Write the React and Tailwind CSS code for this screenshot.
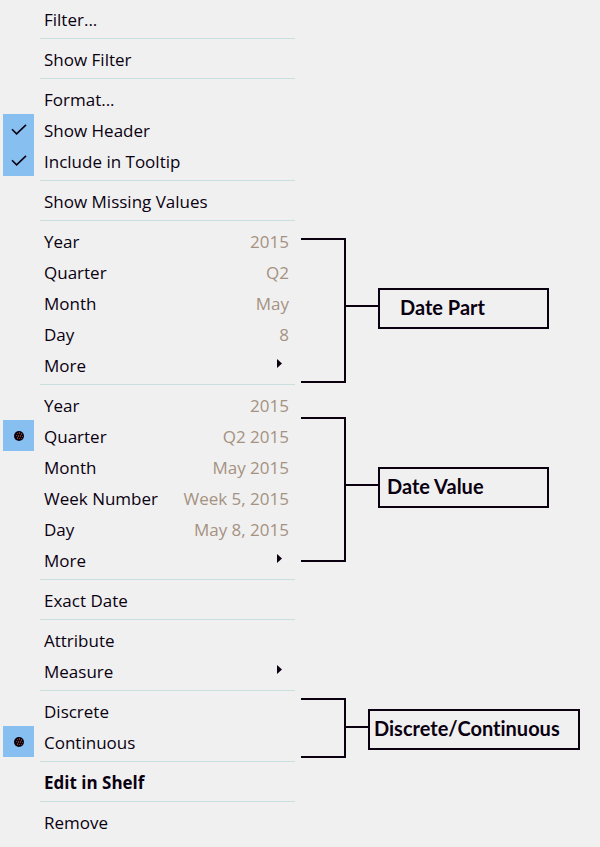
import { useState } from "react";

const SECTIONS = [
  [{ label: "Filter..." }],
  [{ label: "Show Filter" }],
  [
    { label: "Format..." },
    { label: "Show Header", type: "checkbox", name: "header" },
    { label: "Include in Tooltip", type: "checkbox", name: "tooltip" },
  ],
  [{ label: "Show Missing Values" }],
  [
    { label: "Year", hint: "2015", type: "radio", name: "date", value: "part-year" },
    { label: "Quarter", hint: "Q2", type: "radio", name: "date", value: "part-quarter" },
    { label: "Month", hint: "May", type: "radio", name: "date", value: "part-month" },
    { label: "Day", hint: "8", type: "radio", name: "date", value: "part-day" },
    { label: "More", submenu: true },
  ],
  [
    { label: "Year", hint: "2015", type: "radio", name: "date", value: "value-year" },
    { label: "Quarter", hint: "Q2 2015", type: "radio", name: "date", value: "value-quarter" },
    { label: "Month", hint: "May 2015", type: "radio", name: "date", value: "value-month" },
    { label: "Week Number", hint: "Week 5, 2015", type: "radio", name: "date", value: "value-week" },
    { label: "Day", hint: "May 8, 2015", type: "radio", name: "date", value: "value-day" },
    { label: "More", submenu: true },
  ],
  [{ label: "Exact Date" }],
  [{ label: "Attribute" }, { label: "Measure", submenu: true }],
  [
    { label: "Discrete", type: "radio", name: "mode", value: "discrete" },
    { label: "Continuous", type: "radio", name: "mode", value: "continuous" },
  ],
  [{ label: "Edit in Shelf", bold: true }],
  [{ label: "Remove" }],
];

function CheckMark() {
  return (
    <svg width="16" height="12" viewBox="0 0 16 12" fill="none" stroke="#0a0010" strokeWidth="1.6" aria-hidden="true">
      <path d="M1 5.2 L5.6 9.8 L15 0.8" />
    </svg>
  );
}

function Dot() {
  return (
    <svg width="10" height="10" viewBox="0 0 10 10" aria-hidden="true">
      <circle cx="5" cy="5" r="5" fill="#0a0010" />
      <path
        d="M3 2h1v1H3zM5 1h1v2H5zM7 2h1v2H7zM2 4h1v1H2zM4 4h1v2H4zM6 4h1v2H6zM8 5h1v1H8zM3 6h1v2H3zM5 7h1v1H5zM7 7h1v1H7z"
        fill="#7a3a1e"
      />
    </svg>
  );
}

function Choice({ item, state, setState }) {
  const isRadio = item.type === "radio";
  const checked = isRadio ? state[item.name] === item.value : state[item.name];
  const onChange = () => setState({ ...state, [item.name]: isRadio ? item.value : !checked });
  return (
    <label className="flex h-[31px] items-center gap-[10px] pr-[6px] pl-[3px]">
      <span className="grid size-[31px] shrink-0 place-items-center">
        <input
          type={item.type}
          name={item.name}
          checked={checked}
          onChange={onChange}
          className="col-start-1 row-start-1 size-[31px] appearance-none checked:bg-[#87bff0]"
        />
        {checked && (
          <span className="pointer-events-none z-10 col-start-1 row-start-1">
            {isRadio ? <Dot /> : <CheckMark />}
          </span>
        )}
      </span>
      <span className="flex-1 pt-[2px]">{item.label}</span>
      {item.hint && <span className="pt-[2px] text-[#a59282]">{item.hint}</span>}
    </label>
  );
}

function Action({ item }) {
  return (
    <button type="button" className="flex h-[31px] w-full items-center pr-[6px] pl-[44px] text-left">
      <span className={item.bold ? "flex-1 pt-[2px] font-bold" : "flex-1 pt-[2px]"}>{item.label}</span>
      {item.submenu && (
        <svg width="5" height="9" viewBox="0 0 5 9" className="mr-[7px] mb-[2px]" aria-hidden="true">
          <path d="M0 0L5 4.5L0 9z" fill="#0a0010" />
        </svg>
      )}
    </button>
  );
}

function Callout({ children, bracket, branch, box }) {
  return (
    <div className={`flex items-start ${bracket}`}>
      <div className="h-full w-[45px] border-y-2 border-r-2 border-[#0a0010]" />
      <div className={`flex items-start ${branch}`}>
        <div className="mt-[17px] h-[2px] flex-1 bg-[#0a0010]" />
        <div className={`flex h-[41px] items-center border-2 border-[#0a0010] pb-[3px] ${box}`}>{children}</div>
      </div>
    </div>
  );
}

export default function App() {
  const [state, setState] = useState({
    header: true,
    tooltip: true,
    date: "value-quarter",
    mode: "continuous",
  });

  return (
    <main className="flex min-h-screen items-start gap-[6px] bg-[#f0f0f0] text-[#0a0010]">
      <div className="w-[295px] shrink-0 py-[3px] font-['Open_Sans',sans-serif] text-[17px] leading-[31px] whitespace-nowrap">
        {SECTIONS.map((items, index) => (
          <section key={index}>
            {index > 0 && <hr className="my-[4px] ml-[40px] border-t border-[#c8e0de]" />}
            {items.map((item) =>
              item.type ? (
                <Choice key={item.label} item={item} state={state} setState={setState} />
              ) : (
                <Action key={item.label} item={item} />
              )
            )}
          </section>
        ))}
      </div>

      <div className="flex-1 pt-[238px] font-[Lato,sans-serif] text-[20px] font-bold whitespace-nowrap [font-variant-ligatures:none]">
        <Callout bracket="h-[145px]" branch="mt-[50px] w-[203px]" box="w-[171px] pl-[20px]">
          Date Part
        </Callout>
        <Callout bracket="mt-[34px] h-[145px]" branch="mt-[50px] w-[203px]" box="w-[171px] pl-[7px]">
          Date Value
        </Callout>
        <Callout bracket="mt-[136px] h-[60px]" branch="mt-[11px] w-[234px]" box="w-[212px] pl-[4px]">
          Discrete/Continuous
        </Callout>
      </div>
    </main>
  );
}
